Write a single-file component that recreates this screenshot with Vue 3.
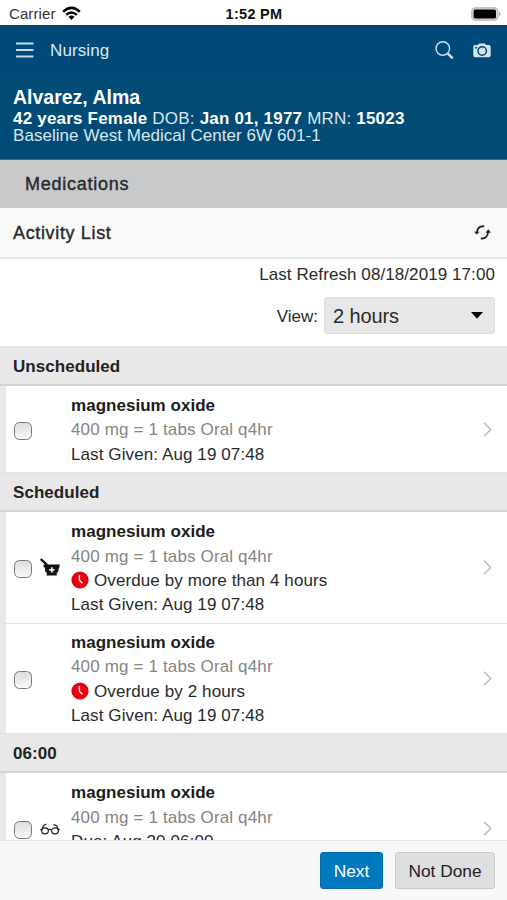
<script setup>
const sections = [
  {
    title: 'Unscheduled',
    items: [{ lines: ['Last Given: Aug 19 07:48'] }],
  },
  {
    title: 'Scheduled',
    items: [
      { icon: 'mortar', overdue: 'Overdue by more than 4 hours', lines: ['Last Given: Aug 19 07:48'] },
      { overdue: 'Overdue by 2 hours', lines: ['Last Given: Aug 19 07:48'] },
    ],
  },
  {
    title: '06:00',
    items: [{ icon: 'glasses', lines: ['Due: Aug 20 06:00', 'Last Given: Aug 19 07:48'] }],
  },
]
</script>

<template>
  <div class="screen">
    <header class="status">
      <div class="carrier">
        <span>Carrier</span>
        <svg class="wifi" width="19" height="15" viewBox="0 0 19 15">
          <g fill="none" stroke="#000" stroke-width="2.6">
            <path d="M1.2 5.8 Q9.5 -2 17.8 5.8" />
            <path d="M4.2 8.9 Q9.5 4.1 14.8 8.9" />
          </g>
          <path d="M6.5 10.8 Q9.5 8.2 12.5 10.8 L9.5 14 Z" />
        </svg>
      </div>
      <div class="time">1:52 PM</div>
      <svg class="battery" width="30" height="14" viewBox="0 0 30 14">
        <rect x=".8" y=".8" width="26" height="12.4" rx="3.6" fill="#ddd" stroke="#b5b5b5" stroke-width="1.2" />
        <rect x="2.6" y="2.5" width="22.4" height="9" rx="1.6" />
        <path d="M28 4.7 Q29.8 5.3 29.8 7 T28 9.3Z" fill="#b5b5b5" />
      </svg>
    </header>

    <nav class="nav">
      <svg width="18" height="16" viewBox="0 0 18 16">
        <path d="M0 1.5H17.5M0 8H17.5M0 14.5H17.5" stroke="#c5dbe9" stroke-width="1.8" />
      </svg>
      <span class="nav-title">Nursing</span>
      <svg class="search" width="19" height="19" viewBox="0 0 19 19" fill="none" stroke="#cfe0ec">
        <circle cx="7.8" cy="7.5" r="6.8" stroke-width="1.4" />
        <path d="M12.6 12.4L17.7 17.4" stroke-width="2.5" />
      </svg>
      <svg width="18" height="15" viewBox="0 0 18 15">
        <path d="M2 2H4.8L6 .5H12L13.2 2H16Q17.7 2 17.7 3.7V12.6Q17.7 14.2 16 14.2H2Q.3 14.2 .3 12.6V3.7Q.3 2 2 2Z" fill="#d3e3ef" />
        <circle cx="9.2" cy="8" r="4.2" fill="none" stroke="#004a7a" stroke-width="1.5" />
        <circle cx="3.1" cy="4.7" r="1" fill="#004a7a" />
      </svg>
    </nav>

    <section class="patient">
      <div class="name">Alvarez, Alma</div>
      <div class="demo"><b>42 years</b> <b>Female</b> DOB: <b>Jan 01, 1977</b> MRN: <b>15023</b></div>
      <div class="place">Baseline West Medical Center 6W 601-1</div>
    </section>

    <div class="module">Medications</div>
    <div class="list-head">
      <span>Activity List</span>
      <svg width="17" height="15" viewBox="0 0 17 15">
        <g fill="none" stroke="#222" stroke-width="1.8">
          <path d="M10.2 1.4C6 .6 3.2 3.2 2.9 7.5" />
          <path d="M6.8 13.3C11 14.2 13.9 11.5 14.1 7" />
        </g>
        <path d="M0 6.8H5.6L2.7 9.6ZM11.4 7.7H17L14.3 4.3Z" fill="#222" />
      </svg>
    </div>

    <section class="filters">
      <div class="refresh">Last Refresh 08/18/2019 17:00</div>
      <div class="view">
        <span>View:</span>
        <div class="select">
          <span>2 hours</span>
          <svg width="12" height="7" viewBox="0 0 12 7"><path d="M0 0H12L6 6.8Z" /></svg>
        </div>
      </div>
    </section>

    <main class="activities">
      <template v-for="section in sections" :key="section.title">
        <h2 class="group">{{ section.title }}</h2>
        <article v-for="(item, i) in section.items" :key="i" class="row">
          <span class="check"></span>
          <div class="marker">
            <svg v-if="item.icon === 'mortar'" width="20" height="19" viewBox="0 0 20 19">
              <path d="M.7 1L7.2 6.8" stroke="#111" stroke-width="2.3" />
              <path d="M3.6 6.6H19.6V9.2H19Q19 13.6 16.6 15.6L17 17.6H6.4L7 15.6Q4.6 13.6 4.6 9.2H3.6Z" fill="#111" />
              <path d="M11.8 9.2V14.4M9.2 11.8H14.4" stroke="#fff" stroke-width="1.7" />
            </svg>
            <svg v-if="item.icon === 'glasses'" class="glasses" width="20" height="12" viewBox="0 0 20 12" fill="none" stroke="#222" stroke-width="1.2">
              <ellipse cx="5" cy="7.8" rx="3.4" ry="3" />
              <ellipse cx="15" cy="7.8" rx="3.4" ry="3" />
              <path d="M8.2 7Q10 5.6 11.8 7M.2 6.4L2.2 6.8M17.8 6.8L19.8 6.4M1.8 7.3Q2.4 2.6 6.4 1M18.2 7.3Q17.6 1.4 13.2 2" />
            </svg>
          </div>
          <div class="details">
            <div class="med">magnesium oxide</div>
            <div class="dose">400 mg = 1 tabs Oral q4hr</div>
            <div v-if="item.overdue" class="overdue">
              <svg width="18" height="18" viewBox="0 0 18 18">
                <circle cx="9" cy="9" r="8.6" fill="#e60012" />
                <path d="M8.4 4V9.3L11.4 12.3" fill="none" stroke="#fff" stroke-width="1.4" />
              </svg>
              <span>{{ item.overdue }}</span>
            </div>
            <div v-for="line in item.lines" :key="line">{{ line }}</div>
          </div>
          <svg class="chevron" width="9" height="15" viewBox="0 0 9 15">
            <path d="M1 .8L7.7 7.5L1 14.2" fill="none" stroke="#bcbcbc" stroke-width="1.5" />
          </svg>
        </article>
      </template>
    </main>

    <footer class="actions">
      <button class="btn primary">Next</button>
      <button class="btn">Not Done</button>
    </footer>
  </div>
</template>

<style>
body { margin: 0; }
</style>

<style scoped>
* { box-sizing: border-box; }
.screen {
  width: 507px;
  height: 900px;
  overflow: hidden;
  display: flex;
  flex-direction: column;
  background: #fff;
  color: #2a2a2a;
  font: 17px/24.4px "Liberation Sans", Arial, sans-serif;
}
.screen > * { flex: none; }
.status {
  height: 25px;
  padding: 2px 6px 0 9px;
  display: grid;
  grid-template-columns: 1fr auto 1fr;
  align-items: center;
  font-size: 15px;
  line-height: 22px;
}
.carrier { display: flex; align-items: center; gap: 6px; color: #333; letter-spacing: .1px; }
.time { margin-right: 2px; font-weight: bold; font-size: 14.5px; color: #111; letter-spacing: .3px; }
.battery { justify-self: end; }
.nav {
  height: 48px;
  padding: 2px 16px 0;
  display: flex;
  align-items: center;
  background: #004a7a;
  color: #dce9f2;
}
.nav-title { flex: 1; margin-left: 16px; padding-top: 2px; letter-spacing: .1px; }
.search { margin-right: 19px; }
.patient {
  height: 87px;
  padding: 13px 13px 0;
  background: #004c76;
  border-bottom: 1px solid #33709a;
  color: #d9e7f0;
  line-height: 17px;
}
.patient b, .name { color: #fff; }
.name { font-size: 19.5px; font-weight: bold; line-height: 23px; }
.demo { padding-top: 1px; letter-spacing: .2px; }
.place { letter-spacing: .05px; }
.module {
  height: 48px;
  padding-left: 25px;
  line-height: 48px;
  font-size: 18px;
  letter-spacing: .75px;
  background: #c8c9cb;
  -webkit-text-stroke: .4px #2a2a2a;
}
.list-head {
  height: 51px;
  padding: 0 16px 0 13px;
  display: flex;
  align-items: center;
  justify-content: space-between;
  font-size: 18px;
  letter-spacing: .65px;
  background: #f9f9f9;
  border-bottom: 2px solid #e4e4e4;
}
.list-head span { padding-top: 1px; -webkit-text-stroke: .4px #2a2a2a; }
.filters { height: 87px; padding: 4px 12px 0; text-align: right; }
.refresh { letter-spacing: .08px; }
.view { margin-top: 10px; display: flex; justify-content: flex-end; align-items: center; gap: 6px; }
.view > span { padding-top: 2px; }
.select {
  width: 171px;
  height: 37px;
  padding: 0 11px 0 8px;
  display: flex;
  align-items: center;
  justify-content: space-between;
  font-size: 20px;
  letter-spacing: -.1px;
  background: #e7e7e7;
  border: 1px solid #dcdcdc;
  border-radius: 3px;
}
.activities { height: 494px; overflow: hidden; }
.group {
  height: 40px;
  margin: 0;
  padding-left: 13px;
  font-size: 17px;
  line-height: 39px;
  letter-spacing: .05px;
  color: #222;
  background: #e8e8e8;
  border-top: 1px solid #e2e2e2;
  border-bottom: 2px solid #d2d3d4;
}
.row {
  display: flex;
  align-items: center;
  padding: 8px 15px 5px 8px;
  border-left: 6px solid #e8e8e8;
}
.row + .row { border-top: 1px solid #e3e3e3; padding-top: 7px; }
.check {
  width: 18px;
  height: 18px;
  border: 1.5px solid #777;
  border-radius: 5.5px;
  background: linear-gradient(#ddd, #f8f8f8);
}
.marker { width: 20px; margin: -3px 11px 0 8px; display: flex; }
.chevron { margin-top: -3px; }
.details { flex: 1; letter-spacing: .1px; }
.med { font-weight: bold; color: #1c1c1c; letter-spacing: .03px; }
.dose { color: #858585; letter-spacing: .15px; }
.overdue { display: flex; align-items: center; gap: 5px; }
.overdue svg { margin-top: -2px; }
.actions {
  height: 60px;
  padding: 0 12px;
  display: flex;
  align-items: center;
  justify-content: flex-end;
  gap: 12px;
  background: #f8f8f8;
  border-top: 1px solid #e6e6e6;
}
.btn {
  height: 37px;
  padding: 1px 0 0;
  width: 100px;
  font: 17.3px "Liberation Sans", Arial, sans-serif;
  color: #222;
  background: #dedfe0;
  border: 1px solid #c8cbcd;
  border-radius: 3px;
}
.btn.primary { width: 63px; color: #fff; background: #0079be; border-color: #006ead; }
</style>
